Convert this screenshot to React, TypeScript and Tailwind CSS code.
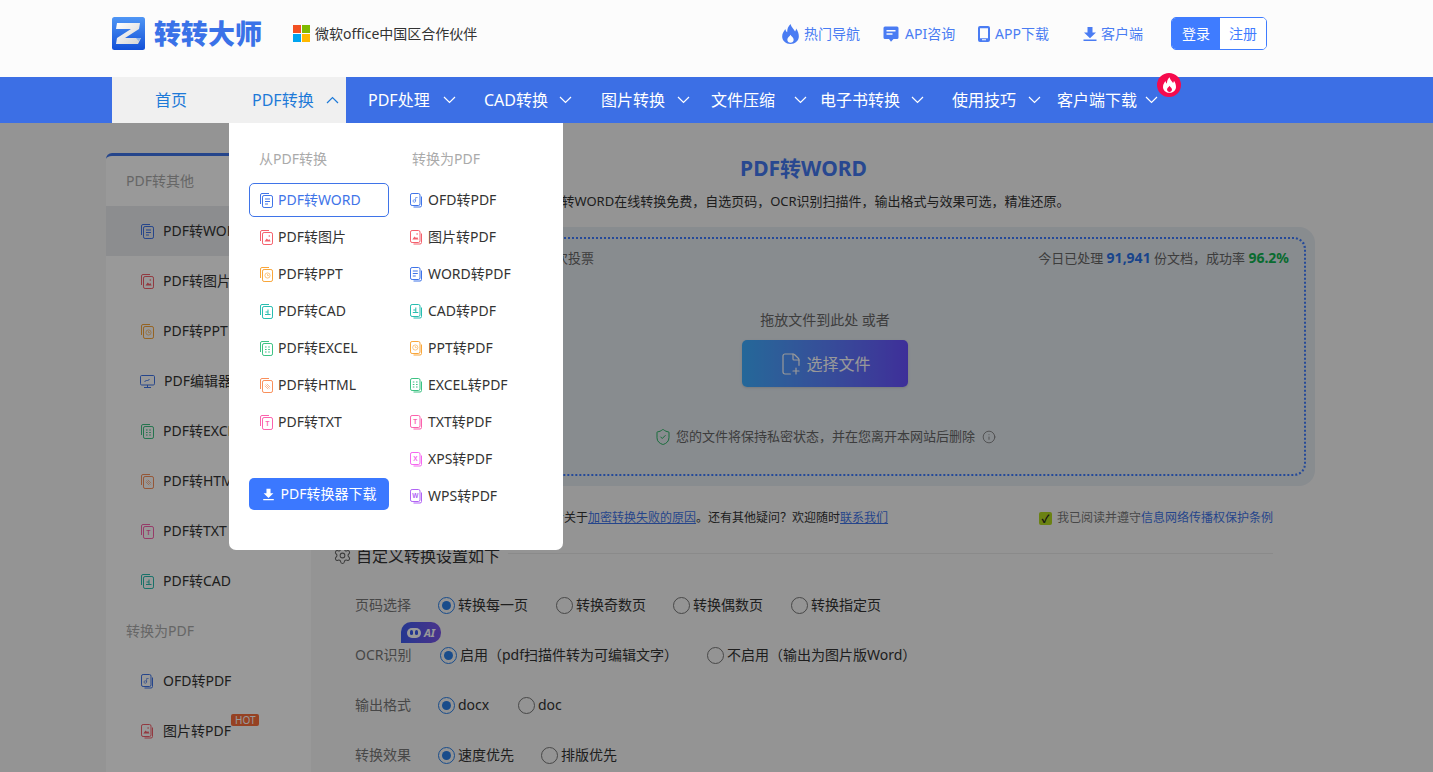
import { Info, Settings, ShieldCheck, FilePlus2 } from "lucide-react";
import clsx from "clsx";

type Glyph = "lines" | "image" | "clock" | "cad" | "grid" | "link" | "ofd" | "T" | "X" | "W";

const BLUE = "#3f74e8";
const RED = "#f4606c";
const ORANGE = "#f9a63a";
const TEAL = "#27bdb0";
const GREEN = "#3cc283";
const CORAL = "#f98f5a";
const PINK = "#fb62ad";
const MAGENTA = "#f566ee";
const PURPLE = "#b063f5";

function DocIcon({ glyph, color, flip = false }: { glyph: Glyph; color: string; flip?: boolean }) {
  return (
    <svg width="13" height="15" viewBox="0 0 13 15" fill="none" stroke={color} strokeWidth="1" className="shrink-0">
      {flip ? (
        <>
          <path d="M11.5 3.5 V12.5 A1.5 1.5 0 0 1 10 14 H3.5" />
          <rect x="0.5" y="0.5" width="9.5" height="12" rx="1.6" />
        </>
      ) : (
        <>
          <path d="M0.5 11 V2 A1.5 1.5 0 0 1 2 0.5 H9" />
          <rect x="2.5" y="2.5" width="10" height="12" rx="1.6" />
        </>
      )}
      <g transform={flip ? "translate(-2.2 -2)" : ""}>
        {glyph === "lines" && <path d="M5 6h5M5 8.5h5M5 11h3" />}
        {glyph === "image" && (
          <>
            <path d="M4.5 11.5l2.2-3 1.6 1.6 1-1 1.4 2.4z" fill={color} stroke="none" />
            <circle cx="9.3" cy="6" r="0.8" fill={color} stroke="none" />
          </>
        )}
        {glyph === "clock" && (
          <>
            <circle cx="7.5" cy="8.5" r="2.6" strokeWidth="0.8" opacity="0.8" />
            <path d="M7.5 7v1.6h1.5" strokeWidth="0.7" opacity="0.8" />
          </>
        )}
        {glyph === "cad" && <path d="M8 5.5v5M5 10.5h5.5M5.5 8h2.5" />}
        {glyph === "grid" && <path d="M5 6h1.6M8.2 6h1.6M5 8.5h1.6M8.2 8.5h1.6M5 11h1.6M8.2 11h1.6" strokeWidth="1.1" />}
        {glyph === "link" && <path d="M5.5 6.5l4 4M6.8 5.8l3.4 3.4M4.8 7.8l3.4 3.4" strokeWidth="0.9" opacity="0.7" />}
        {glyph === "ofd" && (
          <>
            <circle cx="6.5" cy="10" r="1.3" strokeWidth="0.8" opacity="0.8" />
            <path d="M7.8 10V6.5h2" strokeWidth="0.8" opacity="0.8" />
          </>
        )}
        {(glyph === "T" || glyph === "X" || glyph === "W") && (
          <text x="7.5" y="11" textAnchor="middle" fontSize="6.5" fontWeight="700" fontFamily="Liberation Sans, sans-serif" fill={color} stroke="none">
            {glyph}
          </text>
        )}
      </g>
    </svg>
  );
}

function MonitorIcon() {
  return (
    <svg width="15" height="15" viewBox="0 0 15 15" fill="none" stroke={BLUE} strokeWidth="1" className="shrink-0 -ml-px">
      <rect x="0.5" y="1.5" width="14" height="9.5" rx="1.2" />
      <path d="M7.5 11v2.5M4 13.5h7" />
      <path d="M4.5 8l2-2 1 1 2-2" />
    </svg>
  );
}

function Chevron({ up = false, color = "#fff" }: { up?: boolean; color?: string }) {
  return (
    <svg width="13" height="8" viewBox="0 0 13 8" fill="none" stroke={color} strokeWidth="1.2" className="shrink-0">
      <path d={up ? "M1 7l5.5-5.5L12 7" : "M1 1l5.5 5.5L12 1"} />
    </svg>
  );
}

function FlameIcon({ className }: { className?: string }) {
  return (
    <svg viewBox="0 0 20 24" fill="currentColor" className={className}>
      <path
        fillRule="evenodd"
        d="M10 0C11 4 14 6 15.5 9C16.2 8 16.8 7 16.8 5.5C19 8.5 20 12 20 15C20 20 15.5 24 10 24C4.5 24 0 20 0 15C0 11 2 9 3.8 6C4.1 8 5 9 6 10C6 6 7 3 10 0ZM10 13C9 15 6.2 16 6.2 19C6.2 21 8 22.6 10 22.6C12 22.6 13.8 21 13.8 19C13.8 16 11 15 10 13Z"
      />
    </svg>
  );
}

function DownloadIcon({ className }: { className?: string }) {
  return (
    <svg viewBox="0 0 16 16" fill="currentColor" className={className}>
      <path d="M5.5 1h5v5.5h3.5L8 12.2 2 6.5h3.5zM1.5 13.5h13V15h-13z" />
    </svg>
  );
}

function Logo() {
  return (
    <svg width="33" height="33" viewBox="0 0 33 33" className="shrink-0">
      <defs>
        <linearGradient id="logoBg" x1="0" y1="0" x2="0" y2="1">
          <stop offset="0" stopColor="#4f96f5" />
          <stop offset="1" stopColor="#1250d8" />
        </linearGradient>
        <linearGradient id="logoZ" x1="0" y1="0" x2="1" y2="1">
          <stop offset="0" stopColor="#ffffff" />
          <stop offset="1" stopColor="#d4d4d4" />
        </linearGradient>
      </defs>
      <rect width="33" height="33" rx="2.5" fill="url(#logoBg)" />
      <path d="M5 6H28L27 12L13 21H29L26 27H4L5 21L19 12H4Z" fill="url(#logoZ)" />
      <path d="M24 21l5 0-2.5 3z" fill="#8fb6ee" />
    </svg>
  );
}

function Windows() {
  return (
    <div className="grid grid-cols-2 gap-px w-[17px] h-[17px] shrink-0">
      <div className="bg-[#f25022]" />
      <div className="bg-[#7fba00]" />
      <div className="bg-[#00a4ef]" />
      <div className="bg-[#ffb900]" />
    </div>
  );
}

function Header() {
  return (
    <header className="h-[77px] bg-[#fcfcfc] flex items-center pl-[112px] pb-[10px] shrink-0">
      <Logo />
      <span className="ml-[9px] w-[120px] text-[27px] leading-[34px] font-black text-[#3a72e8] whitespace-nowrap">转转大师</span>
      <div className="ml-[19px] flex items-center w-[489px]">
        <Windows />
        <span className="ml-[5px] text-sm text-[#333] whitespace-nowrap">微软office中国区合作伙伴</span>
      </div>
      <div className="flex items-center text-sm text-[#4a7cf3] whitespace-nowrap">
        <FlameIcon className="w-[17px] h-[20px] shrink-0" />
        <span className="ml-[5px] w-[80px]">热门导航</span>
        <svg width="16" height="16" viewBox="0 0 16 16" className="shrink-0 -ml-[1px]">
          <path
            fillRule="evenodd"
            d="M2 0.5h12a1.5 1.5 0 0 1 1.5 1.5v9.5a1.5 1.5 0 0 1-1.5 1.5h-3.5L8 15.8 6 13H2a1.5 1.5 0 0 1-1.5-1.5V2A1.5 1.5 0 0 1 2 0.5zM3.5 4v1.4h9V4zM3.5 7.3v1.4h6V7.3z"
            fill="#4a7cf3"
          />
        </svg>
        <span className="ml-[6px] w-[73px]">API咨询</span>
        <svg width="12" height="16" viewBox="0 0 12 16" className="shrink-0">
          <path d="M2 0h8a2 2 0 0 1 2 2v12a2 2 0 0 1-2 2H2a2 2 0 0 1-2-2V2a2 2 0 0 1 2-2zM2 2.2v10h8v-10zM4 13.3v1h4v-1z" fill="#4a7cf3" fillRule="evenodd" />
        </svg>
        <span className="ml-[5px] w-[87px]">APP下载</span>
        <DownloadIcon className="w-[16px] h-[16px] shrink-0" />
        <span className="ml-[3px] w-[70px]">客户端</span>
      </div>
      <div className="flex h-[33px] w-[96px] rounded-[5px] border border-[#3f7cff] overflow-hidden text-sm">
        <div className="w-[48px] bg-[#3f7cff] text-white flex items-center justify-center">登录</div>
        <div className="flex-1 bg-white text-[#3f7cff] flex items-center justify-center">注册</div>
      </div>
    </header>
  );
}

const navItems = [
  { label: "PDF处理", box: "w-[116px]", text: "w-[75px]" },
  { label: "CAD转换", box: "w-[117px]", text: "w-[75px]" },
  { label: "图片转换", box: "w-[110px]", text: "w-[76px]" },
  { label: "文件压缩", box: "w-[109px]", text: "w-[83px]" },
  { label: "电子书转换", box: "w-[132px]", text: "w-[91px]" },
  { label: "使用技巧", box: "w-[105px]", text: "w-[76px]" },
  { label: "客户端下载", box: "w-[110px]", text: "w-[88px]" },
];

const fromPdf: { label: string; glyph: Glyph; color: string }[] = [
  { label: "PDF转WORD", glyph: "lines", color: BLUE },
  { label: "PDF转图片", glyph: "image", color: RED },
  { label: "PDF转PPT", glyph: "clock", color: ORANGE },
  { label: "PDF转CAD", glyph: "cad", color: TEAL },
  { label: "PDF转EXCEL", glyph: "grid", color: GREEN },
  { label: "PDF转HTML", glyph: "link", color: CORAL },
  { label: "PDF转TXT", glyph: "T", color: PINK },
];

const toPdf: { label: string; glyph: Glyph; color: string }[] = [
  { label: "OFD转PDF", glyph: "ofd", color: BLUE },
  { label: "图片转PDF", glyph: "image", color: RED },
  { label: "WORD转PDF", glyph: "lines", color: BLUE },
  { label: "CAD转PDF", glyph: "cad", color: TEAL },
  { label: "PPT转PDF", glyph: "clock", color: ORANGE },
  { label: "EXCEL转PDF", glyph: "grid", color: GREEN },
  { label: "TXT转PDF", glyph: "T", color: PINK },
  { label: "XPS转PDF", glyph: "X", color: MAGENTA },
  { label: "WPS转PDF", glyph: "W", color: PURPLE },
];

function DropMenu() {
  return (
    <div className="absolute left-[229px] top-[46px] z-30 w-[334px] h-[427px] bg-white rounded-b-[7px] flex text-sm">
      <div className="w-[181px] pl-[20px] pt-[26px] flex flex-col">
        <div className="pl-[10px] h-5 leading-5 text-[#aaa] whitespace-nowrap">从PDF转换</div>
        <div className="mt-[14px] flex flex-col gap-[3px] w-[140px]">
          {fromPdf.map((m, i) => (
            <div
              key={m.label}
              className={clsx(
                "h-[34px] rounded-[5px] border flex items-center pl-[10px] gap-[5px] whitespace-nowrap",
                i === 0 ? "border-[#3f74e8] text-[#3f74e8]" : "border-transparent text-[#333]"
              )}
            >
              <DocIcon glyph={m.glyph} color={m.color} />
              {m.label}
            </div>
          ))}
        </div>
        <button className="mt-[39px] w-[140px] h-[32px] rounded-[5px] bg-[#3b78ff] text-white flex items-center justify-center gap-[6px] whitespace-nowrap">
          <DownloadIcon className="w-[13px] h-[13px] shrink-0" />
          PDF转换器下载
        </button>
      </div>
      <div className="pt-[26px] flex flex-col">
        <div className="h-5 leading-5 text-[#aaa] pl-[2px] whitespace-nowrap">转换为PDF</div>
        <div className="mt-[14px] flex flex-col gap-[3px]">
          {toPdf.map((m) => (
            <div key={m.label} className="h-[34px] flex items-center gap-[5px] text-[#333] whitespace-nowrap">
              <DocIcon glyph={m.glyph} color={m.color} flip />
              {m.label}
            </div>
          ))}
        </div>
      </div>
    </div>
  );
}

function Nav() {
  return (
    <nav className="relative z-20 h-[46px] bg-[#3c6fe5] pl-[112px] flex items-center text-base text-white shrink-0">
      <div className="w-[234px] h-full bg-[#f0f0f0] flex items-center text-[#1e7ad8] whitespace-nowrap">
        <span className="ml-[43px] w-[97px]">首页</span>
        <span className="w-[74px]">PDF转换</span>
        <Chevron up color="#1e7ad8" />
      </div>
      <div className="ml-[22px] flex items-center">
        {navItems.map((n) => (
          <div key={n.label} className={clsx("flex items-center whitespace-nowrap", n.box)}>
            <span className={n.text}>{n.label}</span>
            <Chevron />
          </div>
        ))}
      </div>
      <div className="absolute left-[1157px] top-[-4px] w-6 h-6 rounded-full bg-[#f50a4d] flex items-center justify-center">
        <FlameIcon className="w-[13px] h-[16px] text-white" />
      </div>
      <DropMenu />
    </nav>
  );
}

const sideOther: { label: string; glyph?: Glyph; color: string }[] = [
  { label: "PDF转WORD", glyph: "lines", color: BLUE },
  { label: "PDF转图片", glyph: "image", color: RED },
  { label: "PDF转PPT", glyph: "clock", color: ORANGE },
  { label: "PDF编辑器", color: BLUE },
  { label: "PDF转EXCEL", glyph: "grid", color: GREEN },
  { label: "PDF转HTML", glyph: "link", color: CORAL },
  { label: "PDF转TXT", glyph: "T", color: PINK },
  { label: "PDF转CAD", glyph: "cad", color: TEAL },
];

function SideRow({ label, glyph, color, active, hot, flip }: { label: string; glyph?: Glyph; color: string; active?: boolean; hot?: boolean; flip?: boolean }) {
  return (
    <div className={clsx("h-[50px] flex items-center pl-[35px] gap-[9px] text-sm text-[#333] whitespace-nowrap", active && "bg-[#e9ebef]")}>
      {glyph ? <DocIcon glyph={glyph} color={color} flip={flip} /> : <MonitorIcon />}
      <span className="relative">
        {label}
        {hot && (
          <span className="absolute left-full -top-[7px] h-[12px] px-[4px] rounded-[2px] bg-[#fb6d3a] text-white text-[10px] leading-[12px]">HOT</span>
        )}
      </span>
    </div>
  );
}

function Sidebar() {
  return (
    <aside className="w-[205px] h-[700px] shrink-0 bg-white border-t-[3px] border-[#3f74e8] rounded-t-[6px]">
      <div className="h-[50px] flex items-center pl-[20px] text-sm text-[#aaa]">PDF转其他</div>
      {sideOther.map((s, i) => (
        <SideRow key={s.label} label={s.label} glyph={s.glyph} color={s.color} active={i === 0} />
      ))}
      <div className="h-[50px] flex items-center pl-[20px] text-sm text-[#aaa]">转换为PDF</div>
      <SideRow label="OFD转PDF" glyph="ofd" color={BLUE} flip />
      <SideRow label="图片转PDF" glyph="image" color={RED} hot flip />
    </aside>
  );
}

function UploadBox() {
  return (
    <div className="ml-[24px] mt-[16px] w-[980px] h-[259px] rounded-[16px] bg-[#e3e9ef] pt-[10px] pb-[10px] px-[9px]">
      <div className="h-[239px] rounded-[12px] border-2 border-dotted border-[#3f7cff] flex flex-col items-center">
        <div className="w-full mt-[9px] h-5 leading-5 flex justify-between pl-[39px] pr-[15px] text-[13px] text-[#666] whitespace-nowrap">
          <span>累计已收到来自用户的 1,286 次投票</span>
          <span>
            今日已处理 <b className="text-sm text-[#2a72e8]">91,941</b> 份文档，成功率 <b className="text-sm text-[#0fb350]">96.2%</b>
          </span>
        </div>
        <div className="mt-[42px] h-5 leading-5 text-sm text-[#666]">拖放文件到此处 或者</div>
        <button className="mt-[10px] w-[166px] h-[47px] rounded-[5px] bg-gradient-to-r from-[#3cadff] to-[#684eff] text-white flex items-center justify-center gap-[3px] text-base shadow-sm">
          <FilePlus2 className="w-[24px] h-[24px]" strokeWidth={1.2} />
          选择文件
        </button>
        <div className="mt-[40px] h-5 flex items-center text-[13px] text-[#666] whitespace-nowrap">
          <ShieldCheck className="w-[18px] h-[18px] text-[#23b35f]" strokeWidth={1.3} />
          <span className="ml-[4px]">您的文件将保持私密状态，并在您离开本网站后删除</span>
          <Info className="ml-[7px] w-[14px] h-[14px] text-[#777]" strokeWidth={1.4} />
        </div>
      </div>
    </div>
  );
}

function Radio({ checked = false }: { checked?: boolean }) {
  return (
    <span
      className={clsx(
        "w-[17px] h-[17px] rounded-full border shrink-0 flex items-center justify-center bg-transparent",
        checked ? "border-[#2a7fe8]" : "border-[#777]"
      )}
    >
      {checked && <span className="w-[9px] h-[9px] rounded-full bg-[#2a7fe8]" />}
    </span>
  );
}

function Option({ label, checked, box }: { label: string; checked?: boolean; box: string }) {
  return (
    <div className={clsx("flex items-center whitespace-nowrap", box)}>
      <Radio checked={checked} />
      <span className="ml-[3px]">{label}</span>
    </div>
  );
}

function ConvertOptions() {
  return (
    <div className="ml-[44px] text-sm text-[#333]">
      <div className="h-[50px] flex items-center">
        <span className="w-[83px] text-[#777]">页码选择</span>
        <Option checked label="转换每一页" box="w-[118px]" />
        <Option label="转换奇数页" box="w-[117px]" />
        <Option label="转换偶数页" box="w-[118px]" />
        <Option label="转换指定页" box="w-[118px]" />
      </div>
      <div className="relative h-[50px] flex items-center">
        <span className="w-[85px] text-[#777]">OCR识别</span>
        <Option checked label="启用（pdf扫描件转为可编辑文字）" box="w-[267px]" />
        <Option label="不启用（输出为图片版Word）" box="w-[220px]" />
        <div className="absolute left-[46px] top-[-8px] w-[40px] h-[21px] rounded-[10px] rounded-bl-none bg-gradient-to-r from-[#3b5bf0] to-[#7a55e8] flex items-center justify-center gap-[3px]">
          <span className="w-[14px] h-[10px] rounded-full bg-white flex items-center justify-center gap-[2px]">
            <span className="w-[3px] h-[5px] rounded-full bg-[#3b5bf0]" />
            <span className="w-[3px] h-[5px] rounded-full bg-[#3b5bf0]" />
          </span>
          <span className="text-white text-[11px] leading-none font-bold italic">AI</span>
        </div>
      </div>
      <div className="h-[50px] flex items-center">
        <span className="w-[83px] text-[#777]">输出格式</span>
        <Option checked label="docx" box="w-[80px]" />
        <Option label="doc" box="w-[80px]" />
      </div>
      <div className="h-[50px] flex items-center">
        <span className="w-[83px] text-[#777]">转换效果</span>
        <Option checked label="速度优先" box="w-[103px]" />
        <Option label="排版优先" box="w-[100px]" />
      </div>
    </div>
  );
}

function Content() {
  return (
    <div className="w-[1004px] shrink-0">
      <div className="w-[985px] text-center">
        <h1 className="h-[30px] leading-[30px] text-[21px] font-bold text-[#4478f0]">PDF转WORD</h1>
        <p className="mt-[8px] h-5 leading-5 text-[13px] text-[#333] whitespace-nowrap">
          PDF转WORD在线转换免费，自选页码，OCR识别扫描件，输出格式与效果可选，精准还原。
        </p>
      </div>
      <UploadBox />
      <div className="ml-[25px] mt-[22px] w-[937px] h-5 leading-5 flex justify-between text-xs text-[#333] whitespace-nowrap">
        <span>
          如遇文件加密而无法正常转换成功，请查看关于<u className="text-[#3f74e8]">加密转换失败的原因</u>。还有其他疑问？欢迎随时<u className="text-[#3f74e8]">联系我们</u>
        </span>
        <span className="flex items-center text-[#777]">
          <span className="w-[13px] h-[13px] rounded-[2px] bg-[#b3d91e] text-[#222] flex items-center justify-center text-[11px] leading-none font-bold mr-[5px]">✓</span>
          我已阅读并遵守<span className="text-[#3f74e8]">信息网络传播权保护条例</span>
        </span>
      </div>
      <div className="ml-[22px] mt-[3px] w-[940px] h-[49px] flex items-center">
        <Settings className="w-[19px] h-[19px] text-[#666] shrink-0" strokeWidth={1.3} />
        <span className="ml-[4px] text-base text-[#333] whitespace-nowrap">自定义转换设置如下</span>
        <span className="ml-[8px] flex-1 h-px bg-[#e6e6e6] -mt-[4px]" />
      </div>
      <ConvertOptions />
    </div>
  );
}

export default function App() {
  return (
    <div
      className="w-[1433px] h-[772px] overflow-hidden flex flex-col bg-white"
      style={{ fontFamily: '"Noto Sans", "Noto Sans CJK SC", sans-serif' }}
    >
      <Header />
      <Nav />
      <main className="relative flex-1 overflow-hidden bg-[#f7f7f7] flex pl-[106px] pt-[30px]">
        <Sidebar />
        <Content />
        <div className="absolute inset-0 bg-black/40" />
      </main>
    </div>
  );
}
